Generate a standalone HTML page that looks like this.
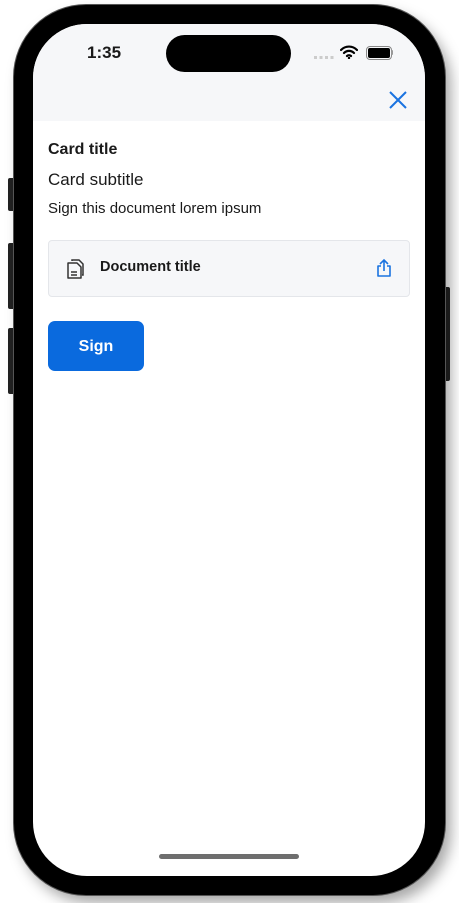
<!DOCTYPE html>
<html><head><style>
body{margin:0;width:459px;height:903px;background:#fff;position:relative;overflow:hidden;font-family:"Liberation Sans",sans-serif}
.btn{position:absolute;background:#222;border-radius:2px}
.frame{position:absolute;left:14px;top:5px;width:431px;height:890px;border-radius:72px;background:#000;box-shadow:0 0 0 1px #555,6px 8px 14px rgba(0,0,0,.35)}
.screen{position:absolute;left:33px;top:24px;width:392px;height:852px;border-radius:54px;background:#fff;overflow:hidden}
.hdr{position:absolute;left:0;top:0;width:392px;height:97px;background:#f6f7f9}
.island{position:absolute;left:133px;top:11px;width:125px;height:37px;border-radius:19px;background:#000}
.t{position:absolute;color:#1a1a1a}
</style></head><body>
<div class="btn" style="left:8px;top:178px;width:7px;height:33px"></div>
<div class="btn" style="left:8px;top:243px;width:7px;height:66px"></div>
<div class="btn" style="left:8px;top:328px;width:7px;height:66px"></div>
<div class="btn" style="left:444px;top:287px;width:6px;height:94px"></div>
<div class="frame"></div>
<div class="screen">
 <div class="hdr"></div>
 <div class="island"></div>
 <div class="t" style="left:54px;top:19px;font-size:17px;font-weight:bold">1:35</div>
 <div style="position:absolute;left:281px;top:32px;width:20px;height:3px;background:repeating-linear-gradient(90deg,#ccc 0 3px,transparent 3px 5.5px)"></div>
 <svg style="position:absolute;left:307px;top:21px" width="18" height="14" viewBox="0 0 18 14"><path d="M1 5a11 11 0 0 1 16 0M4 8a7 7 0 0 1 10 0M7 11a3 3 0 0 1 4 0" stroke="#000" stroke-width="2.2" fill="none" stroke-linecap="round"/><circle cx="9" cy="13" r="1.2"/></svg>
 <div style="position:absolute;left:333px;top:22px;width:22px;height:10px;border:1.5px solid #888;border-radius:4px;padding:1px;box-sizing:content-box"><div style="width:22px;height:10px;background:#000;border-radius:2px"></div></div>
 <div style="position:absolute;left:358px;top:26px;width:2px;height:5px;background:#999;border-radius:1px"></div>
 <svg style="position:absolute;left:356px;top:67px" width="18" height="18" viewBox="0 0 18 18"><path d="M1 1L17 17M17 1L1 17" stroke="#1a73e0" stroke-width="2" fill="none"/></svg>
 <div class="t" style="left:15px;top:117px;font-size:16px;font-weight:bold">Card title</div>
 <div class="t" style="left:15px;top:146px;font-size:17px">Card subtitle</div>
 <div class="t" style="left:15px;top:176px;font-size:15px">Sign this document lorem ipsum</div>
 <div style="position:absolute;left:15px;top:216px;width:360px;height:55px;background:#f6f7f9;border:1px solid #e4e6ea;border-radius:4px"></div>
 <svg style="position:absolute;left:33px;top:234px" width="20" height="22" viewBox="0 0 20 22"><path d="M6 3V2h7l4 4v11h-1" stroke="#333" stroke-width="1.5" fill="none"/><path d="M2 5h9l4 4v11H2z" stroke="#333" stroke-width="1.5" fill="none" stroke-linejoin="round"/><path d="M5 14h6M5 17h6" stroke="#333" stroke-width="1.5"/></svg>
 <div class="t" style="left:67px;top:235px;font-size:14.5px;font-weight:bold">Document title</div>
 <svg style="position:absolute;left:342px;top:234px" width="18" height="20" viewBox="0 0 18 20"><path d="M9 13V2M5 6l4-4 4 4" stroke="#1a73e0" stroke-width="1.6" fill="none"/><path d="M6 8H3v10h12V8h-3" stroke="#1a73e0" stroke-width="1.6" fill="none" stroke-linejoin="round"/></svg>
 <div style="position:absolute;left:15px;top:297px;width:96px;height:50px;background:#0a6ade;border-radius:7px;color:#fff;font-size:16px;font-weight:bold;text-align:center;line-height:52px">Sign</div>
 <div style="position:absolute;left:126px;top:830px;width:140px;height:5px;border-radius:3px;background:#6e6e6e"></div>
</div>
</body></html>
